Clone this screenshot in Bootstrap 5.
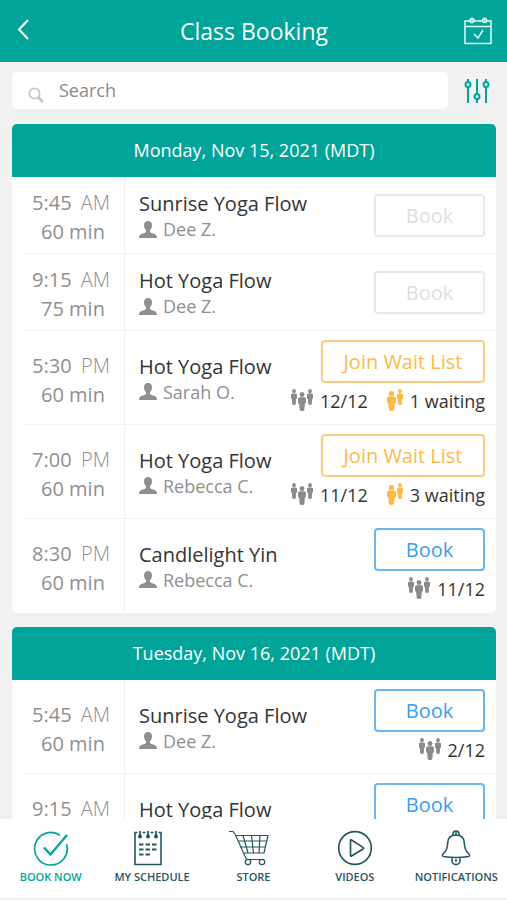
<!DOCTYPE html>
<html lang="en">
<head>
<meta charset="utf-8">
<meta name="viewport" content="width=device-width, initial-scale=1">
<title>Class Booking</title>
<link href="https://cdn.jsdelivr.net/npm/bootstrap@5.3.0/dist/css/bootstrap.min.css" rel="stylesheet">
<style>
  :root { --teal: #00a499; --navy: #24565f; --line: #edf1f1; }
  body { font-family: "Open Sans", "Noto Sans", sans-serif; background: #f1f1f1; color: #333; }
  svg { display: block; flex: none; }
  .icon-btn { background: none; border: 0; padding: 0; color: inherit; }
  .topbar { background: var(--teal); color: #fff; height: 62px; padding: 0 15px 0 16px; }
  .topbar h1 { font-size: 23px; line-height: 32px; }
  .topbar .icon-btn { width: 28px; }
  .content { padding: 10px 11px 0 12px; scrollbar-width: none; }
  .finder { margin-bottom: 15px; }
  .search { height: 37px; border-radius: 5px; padding: 0 16px; gap: 15px; }
  .search input { border: 0; outline: 0; background: none; font-size: 18px; line-height: 24px; padding: 0 0 2px; color: #444; }
  .search input::placeholder { color: #8a8a8a; opacity: 1; }
  .filter { color: var(--teal); margin: 0 6px 0 16px; }
  .day { border-radius: 5px; margin-bottom: 14px; }
  .day h2 { background: var(--teal); color: #fff; font-size: 18px; line-height: 53px; }
  .slot { min-height: 77px; }
  .slot.tall { min-height: 94px; }
  .slot::before { content: ""; width: 11px; }
  .slot > div { border-bottom: 1px solid var(--line); }
  .slot:last-child > div { border-bottom-color: transparent; }
  .when { width: 102px; border-right: 1px solid var(--line); font-size: 20px; line-height: 29px; color: #8f8f8f; padding: 4px 14px 0 9px; }
  .when .ampm { font-weight: 300; }
  .when .mins { padding-left: 9px; }
  .what { padding: 1px 0 0 14px; }
  .what h3 { font-size: 20px; line-height: 27px; }
  .teacher { font-size: 18px; line-height: 24px; color: #8f8f8f; gap: 6px; }
  .act { padding-right: 11px; }
  .tall .act { padding-bottom: 3px; }
  .act .btn { --bs-btn-border-radius: 4px; --bs-btn-border-width: 2px; font-size: 20px; line-height: 39px; padding: 0; width: 111px; }
  .act .btn-wait { width: 164px; color: #fdb949; border-color: #fdcb7e; }
  .act .btn-go { color: #3a9ee8; border-color: #66b8f2; }
  .act .btn.btn-off { color: #dedede; border-color: #e8e8e8; opacity: 1; }
  .stats { font-size: 18px; line-height: 24px; gap: 19px; margin-top: 6px; }
  .stats span { gap: 7px; }
  .grey { color: #8b8b8b; }
  .amber { color: #fdb940; }
  .tabs { background: #fff; height: 81px; padding-top: 11px; border-bottom: 2px solid #f1f1f1; }
  .tabs a { color: var(--navy); font-size: 11px; line-height: 16px; font-weight: 600; white-space: nowrap; gap: 2px; }
  .tabs a.on { color: var(--teal); }
</style>
<script src="https://cdn.jsdelivr.net/npm/bootstrap@5.3.0/dist/js/bootstrap.bundle.min.js"></script>
</head>
<body class="vh-100 d-flex flex-column overflow-hidden">
<svg class="d-none" aria-hidden="true">
  <symbol id="person" viewBox="0 0 18 17"><path fill="currentColor" d="M9 0C6.400 0 5 1.700 5 4.300c0 2.200.8 4 2 5v1.500C6.600 12.300 1 12.700.2 15.200L0 17h18l-.2-1.800C17 12.700 11.400 12.300 11 10.800V9.300c1.200-1 2-2.800 2-5C13 1.700 11.600 0 9 0z"/></symbol>
  <symbol id="fig" viewBox="0 0 8 18" preserveAspectRatio="none"><g fill="currentColor"><circle cx="4" cy="2.400" r="2.400"/><path d="M1.800 5h4.400Q8 5 8 6.800V10q0 1-1.200 1.300L6.400 16.500q0 1.500-2.400 1.500t-2.400-1.500L1.200 11.300Q0 11 0 10V6.800q0-1.800 1.800-1.800z"/></g></symbol>
  <symbol id="trio" viewBox="0 0 22 22"><use href="#fig" x="0" y="0" width="6" height="16"/><use href="#fig" x="16" y="0" width="6" height="16"/><use href="#fig" x="7" y="3" width="8" height="19"/></symbol>
  <symbol id="duo" viewBox="0 0 16 22"><use href="#fig" x="10" y="0" width="6" height="16"/><use href="#fig" x="0" y="2" width="9" height="20"/></symbol>
</svg>

<header class="topbar d-flex align-items-center justify-content-between flex-shrink-0">
  <button class="icon-btn" type="button" aria-label="Back"><svg width="14" height="26" viewBox="0 0 14 26" fill="none" stroke="#fff" stroke-width="2"><path d="M12 2 3 11.500 12 21"/></svg></button>
  <h1 class="m-0 fw-normal">Class Booking</h1>
  <button class="icon-btn" type="button" aria-label="Calendar"><svg width="28" height="28" viewBox="0 0 28 28" fill="none" stroke="#d9fffa" stroke-width="1.500"><path d="M6 4H1v22.500h26V4h-5M10 4h8M1 9.500h26M10 17l4 4 5-8"/><circle cx="8" cy="3.500" r="2"/><circle cx="20.500" cy="3.500" r="2"/><path d="M8 .5v4M20.500.5v4"/></svg></button>
</header>

<main class="content flex-grow-1 overflow-auto">
  <div class="finder d-flex align-items-center">
    <label class="search bg-white flex-grow-1 d-flex align-items-center">
      <svg class="mt-2" width="16" height="16" viewBox="0 0 16 16" fill="none" stroke="#c8c8c8"><circle cx="6.500" cy="6.500" r="5.200" stroke-width="1.800"/><path d="m10.500 10.500 4.500 4.500" stroke-width="3"/></svg>
      <input class="flex-grow-1" type="text" placeholder="Search" aria-label="Search">
    </label>
    <button class="icon-btn filter" type="button" aria-label="Filter"><svg width="26" height="26" viewBox="0 0 26 26" fill="none" stroke="currentColor" stroke-width="2"><path d="M4 1v3M4 9v16M13 1v15M13 21v4M22 1v3M22 9v16"/><circle cx="4" cy="6.500" r="2.500"/><circle cx="13" cy="18.500" r="2.500"/><circle cx="22" cy="6.500" r="2.500"/></svg></button>
  </div>

  <section class="day bg-white overflow-hidden">
    <h2 class="m-0 fw-normal text-center">Monday, Nov 15, 2021 (MDT)</h2>
    <article class="slot d-flex">
      <div class="when d-flex flex-column justify-content-center"><span class="d-flex justify-content-between">5:45 <span class="ampm">AM</span></span><span class="mins">60 min</span></div>
      <div class="what flex-grow-1 d-flex flex-column justify-content-center"><h3 class="m-0 fw-normal">Sunrise Yoga Flow</h3><span class="teacher d-flex align-items-center"><svg width="18" height="17"><use href="#person"/></svg>Dee Z.</span></div>
      <div class="act d-flex flex-column justify-content-center align-items-end"><button class="btn btn-off" type="button" disabled>Book</button></div>
    </article>
    <article class="slot d-flex">
      <div class="when d-flex flex-column justify-content-center"><span class="d-flex justify-content-between">9:15 <span class="ampm">AM</span></span><span class="mins">75 min</span></div>
      <div class="what flex-grow-1 d-flex flex-column justify-content-center"><h3 class="m-0 fw-normal">Hot Yoga Flow</h3><span class="teacher d-flex align-items-center"><svg width="18" height="17"><use href="#person"/></svg>Dee Z.</span></div>
      <div class="act d-flex flex-column justify-content-center align-items-end"><button class="btn btn-off" type="button" disabled>Book</button></div>
    </article>
    <article class="slot tall d-flex">
      <div class="when d-flex flex-column justify-content-center"><span class="d-flex justify-content-between">5:30 <span class="ampm">PM</span></span><span class="mins">60 min</span></div>
      <div class="what flex-grow-1 d-flex flex-column justify-content-center"><h3 class="m-0 fw-normal">Hot Yoga Flow</h3><span class="teacher d-flex align-items-center"><svg width="18" height="17"><use href="#person"/></svg>Sarah O.</span></div>
      <div class="act d-flex flex-column justify-content-center align-items-end"><button class="btn btn-wait" type="button">Join Wait List</button><div class="stats d-flex"><span class="d-flex"><svg class="grey" width="22" height="22"><use href="#trio"/></svg>12/12</span><span class="d-flex"><svg class="amber" width="16" height="22"><use href="#duo"/></svg>1 waiting</span></div></div>
    </article>
    <article class="slot tall d-flex">
      <div class="when d-flex flex-column justify-content-center"><span class="d-flex justify-content-between">7:00 <span class="ampm">PM</span></span><span class="mins">60 min</span></div>
      <div class="what flex-grow-1 d-flex flex-column justify-content-center"><h3 class="m-0 fw-normal">Hot Yoga Flow</h3><span class="teacher d-flex align-items-center"><svg width="18" height="17"><use href="#person"/></svg>Rebecca C.</span></div>
      <div class="act d-flex flex-column justify-content-center align-items-end"><button class="btn btn-wait" type="button">Join Wait List</button><div class="stats d-flex"><span class="d-flex"><svg class="grey" width="22" height="22"><use href="#trio"/></svg>11/12</span><span class="d-flex"><svg class="amber" width="16" height="22"><use href="#duo"/></svg>3 waiting</span></div></div>
    </article>
    <article class="slot tall d-flex">
      <div class="when d-flex flex-column justify-content-center"><span class="d-flex justify-content-between">8:30 <span class="ampm">PM</span></span><span class="mins">60 min</span></div>
      <div class="what flex-grow-1 d-flex flex-column justify-content-center"><h3 class="m-0 fw-normal">Candlelight Yin</h3><span class="teacher d-flex align-items-center"><svg width="18" height="17"><use href="#person"/></svg>Rebecca C.</span></div>
      <div class="act d-flex flex-column justify-content-center align-items-end"><button class="btn btn-go" type="button">Book</button><div class="stats d-flex"><span class="d-flex"><svg class="grey" width="22" height="22"><use href="#trio"/></svg>11/12</span></div></div>
    </article>
  </section>

  <section class="day bg-white overflow-hidden">
    <h2 class="m-0 fw-normal text-center">Tuesday, Nov 16, 2021 (MDT)</h2>
    <article class="slot tall d-flex">
      <div class="when d-flex flex-column justify-content-center"><span class="d-flex justify-content-between">5:45 <span class="ampm">AM</span></span><span class="mins">60 min</span></div>
      <div class="what flex-grow-1 d-flex flex-column justify-content-center"><h3 class="m-0 fw-normal">Sunrise Yoga Flow</h3><span class="teacher d-flex align-items-center"><svg width="18" height="17"><use href="#person"/></svg>Dee Z.</span></div>
      <div class="act d-flex flex-column justify-content-center align-items-end"><button class="btn btn-go" type="button">Book</button><div class="stats d-flex"><span class="d-flex"><svg class="grey" width="22" height="22"><use href="#trio"/></svg>2/12</span></div></div>
    </article>
    <article class="slot tall d-flex">
      <div class="when d-flex flex-column justify-content-center"><span class="d-flex justify-content-between">9:15 <span class="ampm">AM</span></span><span class="mins">&nbsp;</span></div>
      <div class="what flex-grow-1 d-flex flex-column justify-content-center"><h3 class="m-0 fw-normal">Hot Yoga Flow</h3><span class="teacher">&nbsp;</span></div>
      <div class="act d-flex flex-column justify-content-center align-items-end"><button class="btn btn-go" type="button">Book</button><div class="stats">&nbsp;</div></div>
    </article>
  </section>
</main>

<nav class="tabs row row-cols-5 g-0 flex-shrink-0" aria-label="Main">
  <a class="on d-flex flex-column align-items-center text-decoration-none" href="#book" aria-current="page">
    <svg width="36" height="37" viewBox="0 0 36 37" fill="none" stroke="currentColor"><path d="M27 5.200A16.300 16.300 0 1 0 33.500 14" stroke-width="1.700"/><path d="m11 17.500 6.500 7L34 5" stroke-width="2.200"/></svg>BOOK NOW</a>
  <a class="d-flex flex-column align-items-center text-decoration-none" href="#schedule">
    <svg class="me-2" width="28" height="37" viewBox="0 0 28 37" fill="none" stroke="currentColor"><path d="M3.500 2.500H1v32h26v-32h-2.500M8.500 2.500h3M16.500 2.500h3" stroke-width="1.600"/><path d="M6 1v5M14 1v5M22 1v5" stroke-width="1.800"/><path d="M5 14.500h4.500m2 0H16m2 0h4.500M5 19.500h4.500m2 0H16m2 0h4.500M5 24.500h4.500m2 0H16" stroke-width="2"/><g fill="currentColor" stroke="none"><circle cx="6" cy="6.500" r="2"/><circle cx="14" cy="6.500" r="2"/><circle cx="22" cy="6.500" r="2"/></g></svg>MY SCHEDULE</a>
  <a class="d-flex flex-column align-items-center text-decoration-none" href="#store">
    <svg class="me-2" width="42" height="37" viewBox="0 0 42 37" fill="none" stroke="currentColor" stroke-width="1.200"><path d="M1 1.500h4l2.500 3.500L18.500 29.500H36M7.500 5.500H40l-4 17.500H15.500M9.500 11h29M12 17h26M15 5.500 20 23M23.500 5.500l2 17.500M32 5.500 31 23"/><circle cx="20" cy="32" r="2.700"/><circle cx="34" cy="32" r="2.700"/></svg>STORE</a>
  <a class="d-flex flex-column align-items-center text-decoration-none" href="#videos">
    <svg width="36" height="37" viewBox="0 0 36 37" fill="none" stroke="currentColor" stroke-width="1.700"><circle cx="18" cy="18" r="16.300"/><path d="M13.500 10.500v15q0 1 1 .5L26 19q1.200-.8 0-1.600L14.500 10q-1-.5-1 .5z"/></svg>VIDEOS</a>
  <a class="d-flex flex-column align-items-center text-decoration-none" href="#notifications">
    <svg width="30" height="37" viewBox="0 0 30 37" fill="none" stroke="currentColor" stroke-width="1.600"><path d="M12 5V4a3 3 0 0 1 6 0v1M15 2v3"/><path d="M15 5C9.500 5 7 8.500 6.800 12.500 6.500 18.500 5.500 21 2.500 23.500c-1.800 1.500-1.500 3 1 3.300q11.500 1.300 23 0c2.500-.3 2.800-1.800 1-3.300-3-2.500-4-5-4.300-11C23 8.500 20.500 5 15 5zM11 28v2.500a4 4 0 0 0 8 0V28M15 29v3"/></svg>NOTIFICATIONS</a>
</nav>
</body>
</html>
